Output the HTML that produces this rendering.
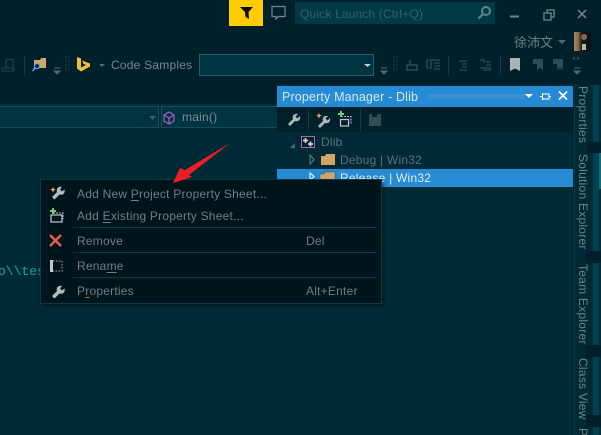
<!DOCTYPE html>
<html><head><meta charset="utf-8">
<style>
html,body{margin:0;padding:0;width:601px;height:435px;overflow:hidden;background:#00212b}
body{position:relative;font-family:"Liberation Sans","Noto Sans CJK TC",sans-serif;font-size:12px;color:#6c8186}
.a{position:absolute;white-space:nowrap}
.t{position:absolute;white-space:nowrap;line-height:16px;letter-spacing:.22px}
u{text-underline-offset:2px}
svg{position:absolute;overflow:visible}
.sep{position:absolute;left:73px;width:304px;height:1px;background:#0b3a47}
.v{position:absolute;left:573px;width:20px;writing-mode:vertical-rl;white-space:nowrap;font-size:12px;line-height:20px;color:#6c8186;letter-spacing:.25px}
</style></head><body>
<!-- editor -->
<div class="a" style="left:0;top:128px;width:277px;height:307px;background:#002b36"></div>
<div class="a" style="left:0;top:104px;width:277px;height:24px;background:#03303c"></div>
<div class="a" style="left:-2px;top:106px;width:159px;height:20px;background:#013440;border:1px solid #0f4f5c"></div>
<div class="a" style="left:161px;top:106px;width:116px;height:20px;background:#013440;border:1px solid #0f4f5c"></div>
<svg style="left:0;top:0" width="300" height="135"><path d="M149 116h7l-3.500 4z" fill="#3f5f66"/>
<path d="M169 112l5 3v6l-5 3-5-3v-6z M164 115l5 3 5-3 M169 118v6" fill="none" stroke="#a45fc0" stroke-width="1.200"/></svg>
<div class="t" style="left:182px;top:109px;color:#7b8f93">main()</div>
<div class="a" style="left:-2px;top:265px;width:42px;font:13px/14px 'Liberation Mono',monospace;color:#1fa398;letter-spacing:0;overflow:hidden">o\\test</div>

<!-- title bar -->
<div class="a" style="left:229px;top:0;width:34px;height:26px;background:#ffcc00"></div>
<svg style="left:0;top:0" width="300" height="30"><path d="M240 7h13l-4.500 5 .5 7-3.500-2-.5-5z" fill="#0a0a00"/>
<path d="M272 6.500h13v10h-6.500l-2.500 2.500v-2.500h-4z" fill="none" stroke="#6f8a8e" stroke-width="1.200"/></svg>
<div class="a" style="left:295px;top:2px;width:200px;height:22px;background:#013a46"></div>
<div class="t" style="left:300px;top:6px;color:#31626c;letter-spacing:.16px">Quick Launch (Ctrl+Q)</div>
<svg style="left:0;top:0" width="601" height="30"><circle cx="486" cy="11" r="4" fill="none" stroke="#5a858c" stroke-width="2"/><path d="M483 14l-4.500 4.500" stroke="#5a858c" stroke-width="2.200"/>
<path d="M510 16.500h9" stroke="#6f8a8e" stroke-width="2"/>
<path d="M544 13h7v7h-7z M547 13v-3h7v7h-3" fill="none" stroke="#6f8a8e" stroke-width="1.300"/>
<path d="M578 10l8 8M586 10l-8 8" stroke="#6f8a8e" stroke-width="1.500"/></svg>
<div class="a" style="left:514px;top:34px;font-size:13px;line-height:16px;color:#6c8186;font-family:'Noto Sans CJK TC',sans-serif">徐沛文</div>
<svg style="left:0;top:0" width="601" height="60"><path d="M558 40h8l-4 4z" fill="#4f6b70"/></svg>
<div class="a" style="left:574px;top:32px;width:17px;height:19px;background:linear-gradient(90deg,#a88a60 0,#8a6a48 25%,#141a1a 45%,#0b1010 100%)"></div>
<div class="a" style="left:581px;top:34px;width:6px;height:6px;background:#8a6658;border-radius:3px"></div>
<div class="a" style="left:582px;top:44px;width:4px;height:6px;background:#b8b8a8"></div>

<!-- toolbar -->
<svg style="left:0;top:0" width="601" height="85">
<path d="M6 59.500h7v11M6 59.500v8" fill="none" stroke="#20404a" stroke-width="1.200"/>
<path d="M2 68h12v3H2z" fill="none" stroke="#20404a"/>
<path d="M24.500 55v20" stroke="#0b3f4c"/>
<path d="M34 60h6l1-2h5v10H34z" fill="#d1a566"/>
<circle cx="37" cy="66" r="2.500" fill="#00212b" stroke="#5aa7e8" stroke-width="1.300"/>
<path d="M35 68l-2.500 3" stroke="#5aa7e8" stroke-width="1.500"/>
<path d="M54 68h6M54 71h6l-3 3z" stroke="#4f6b70" fill="#4f6b70"/>
<path d="M66 56v16M69 56v16" stroke="#1c4a55" stroke-dasharray="1 1"/>
<path d="M77 57l4 1.500v9l5-2.500-2.500-1-1.500-3.500 8 3v3l-9 5-4-3z" fill="#f2bd3a"/>
<path d="M99 64h6l-3 3z" fill="#4f6b70"/>
<path d="M381 68h6M381 71h6l-3 3z" stroke="#4f6b70" fill="#4f6b70"/>
<path d="M394 56v16M397 56v16" stroke="#1c4a55" stroke-dasharray="1 1"/>
<path d="M407 65h10v5h-10z M410 60v5" fill="none" stroke="#2e4c54" stroke-width="1.600"/>
<path d="M427 60h4v8h-4z M432 60h8M434 63h6M434 66h6M434 69h6" fill="none" stroke="#2e4c54" stroke-width="1.300"/>
<path d="M448.500 56v19" stroke="#0b3f4c"/>
<path d="M459 61h8M462 64h5M462 67h5M459 70h8" stroke="#2e4c54" stroke-width="1.300"/>
<path d="M480 60h4v3M486 62h5M486 65h5M480 68h11M483 70h8" fill="none" stroke="#2e4c54" stroke-width="1.300"/>
<path d="M500.500 56v19" stroke="#0b3f4c"/>
<path d="M510 58h10v13l-5-2.500-5 2.500z" fill="#a9b5b6"/>
<path d="M533 59h10v11l-3-2-3 2v-6h-4z" fill="#2e4c54"/><path d="M532 62l4-2v4z" fill="#2e4c54"/>
<path d="M553 59h10v11l-3-2-3 2v-6h-4z" fill="#2e4c54"/><path d="M556 60l4 2-4 2z" fill="#2e4c54"/>
<path d="M574 57v3M578 57v3" stroke="#4f6b70"/>
<path d="M574 68h6M574 71h6l-3 3z" stroke="#4f6b70" fill="#4f6b70"/>
</svg>
<div class="t" style="left:111px;top:57px;color:#6c8a90">Code Samples</div>
<div class="a" style="left:199px;top:54px;width:173px;height:20px;background:#013440;border:1px solid #1a6270"></div>
<svg style="left:0;top:0" width="400" height="80"><path d="M364 64h7l-3.500 3z" fill="#c8d2d2"/></svg>

<!-- property manager -->
<div class="a" style="left:277px;top:85px;width:296px;height:350px;background:#002b36"></div>
<div class="a" style="left:277px;top:86px;width:296px;height:21px;background:#268bd2"></div>
<div class="t" style="left:282px;top:89px;color:#d4e8f4;font-size:12.5px;letter-spacing:.15px">Property Manager - Dlib</div>
<div class="a" style="left:427px;top:94px;width:98px;height:5px;background:radial-gradient(#5fa9dd 40%,transparent 45%) 0 0/2px 2px"></div>
<svg style="left:0;top:0" width="601" height="135"><path d="M525 94h8l-4 4z" fill="#fff"/>
<path d="M540 96.500h2M542.500 93v7M542.500 94h6.500v5h-6.500M549 96.500h2" fill="none" stroke="#fff" stroke-width="1.100"/>
<path d="M559 91.500l8 8M567 91.500l-8 8" stroke="#fff" stroke-width="1.600"/></svg>
<div class="a" style="left:277px;top:107px;width:296px;height:25px;background:#00212b"></div>
<svg id="ic" style="left:0;top:0" width="601" height="135">
<path d="M288 124l5-5c-1-3 1-6 5-5l-2.500 2.500 2 2 2.500-2.500c1 4-2 6-5 5l-5 5z" fill="#aeb8b8"/>
<path d="M308.500 109v22" stroke="#0b3f4c"/>
<path d="M318 126l5-5c-1-3 1-6 5-5l-2.500 2.500 2 2 2.500-2.500c1 4-2 6-5 5l-5 5z" fill="#aeb8b8"/>
<path d="M319 113l1 2 2 .5-2 1-1 2-1-2-2-1 2-.5z" fill="#e8a15c"/>
<path d="M341 116.500h10v7" fill="none" stroke="#b8c2c2" stroke-dasharray="2 1"/>
<path d="M340.500 119.500h8v6.500h-8z" fill="none" stroke="#b8c2c2" stroke-width="1.300"/>
<path d="M338 114h6M341 111v6" stroke="#6fce6f" stroke-width="2"/>
<path d="M360.500 109v22" stroke="#0b3f4c"/>
<path d="M369 114h12v12h-12z" fill="#2e4c54"/><path d="M372 114h5v3h-5z" fill="#00212b"/>
</svg>
<div class="a" style="left:277px;top:169px;width:296px;height:18px;background:#268bd2"></div>
<svg style="left:0;top:0" width="601" height="190">
<path d="M290 148l5-5v5z" fill="#4f6b70"/>
<path d="M301.500 136.500h13v11h-13z" fill="#00212b" stroke="#b660b6"/>
<path d="M305.500 138v5M303 140.500h5M310.500 141.500v5M308 144h5" stroke="#d0d6d6" stroke-width="1.700"/>
<path d="M310 155l4 4.500-4 4.500z" fill="none" stroke="#6c8186"/>
<path d="M321 156h4l1-2h9v11h-14z" fill="#d1a566"/>
<path d="M310 173l4 3.500-4 3.500z" fill="none" stroke="#fff"/>
<path d="M320 174h4l1-2h10v11h-15z" fill="#d1a566" stroke="#1a5e8c" stroke-width=".5"/>
</svg>
<div class="t" style="left:321px;top:134px;color:#56707a">Dlib</div>
<div class="t" style="left:340px;top:152px;color:#56707a">Debug | Win32</div>
<div class="t" style="left:340px;top:170px;color:#e4f0f6">Release | Win32</div>

<!-- right rail -->
<div class="a" style="left:573px;top:85px;width:28px;height:350px;background:#002b36"></div>
<div class="a" style="left:574px;top:85px;width:1px;height:350px;background:#0b3a47"></div>
<div class="a" style="left:593px;top:85px;width:6px;height:350px;background:#004150"></div>
<div class="a" style="left:586px;top:142px;width:15px;height:11px;background:#00212b"></div>
<div class="a" style="left:586px;top:251px;width:15px;height:12px;background:#00212b"></div>
<div class="a" style="left:586px;top:345px;width:15px;height:12px;background:#00212b"></div>
<div class="a" style="left:586px;top:415px;width:15px;height:12px;background:#00212b"></div>
<div class="a" style="left:599px;top:153px;width:2px;height:36px;background:#0e6a7c"></div>
<div class="v" style="top:86px">Properties</div>
<div class="v" style="top:154px">Solution Explorer</div>
<div class="v" style="top:264px">Team Explorer</div>
<div class="v" style="top:358px">Class View</div>
<div class="v" style="top:428px">P</div>

<!-- context menu -->
<div class="a" style="left:40px;top:179px;width:340px;height:123px;background:#00151b;border:1px solid #0b3a47;box-shadow:2px 2px 3px rgba(0,0,0,.35)"></div>
<div class="sep" style="top:227px"></div>
<div class="sep" style="top:252px"></div>
<div class="sep" style="top:277px"></div>
<div class="t" style="left:77px;top:186px"><span>Add New <u>P</u>roject Property Sheet...</span></div>
<div class="t" style="left:77px;top:208px">Add <u>E</u>xisting Property Sheet...</div>
<div class="t" style="left:77px;top:233px">Remove</div>
<div class="t" style="left:77px;top:258px">Rena<u>m</u>e</div>
<div class="t" style="left:77px;top:283px">P<u>r</u>operties</div>
<div class="t" style="left:306px;top:233px">Del</div>
<div class="t" style="left:306px;top:283px">Alt+Enter</div>
<svg style="left:0;top:0" width="601" height="435">
<path d="M52 197l5-5c-1-3 1-6 5-5l-2 2.500 2 2 2.500-2c1 4-2 6-5 5l-5 5z" fill="#b4bcbc"/>
<path d="M53 187l1 2 2 .5-2 1-1 2-1-2-2-1 2-.5z" fill="#e8a15c"/>
<path d="M51 215h11v7H51z" fill="none" stroke="#b8c2c2" stroke-width="1.300"/>
<path d="M53 213h10v6" fill="none" stroke="#b8c2c2" stroke-dasharray="2 1"/>
<path d="M50 211h6M53 208v6" stroke="#6fce6f" stroke-width="2"/>
<path d="M50 235l11 11M61 235l-11 11" stroke="#e0604c" stroke-width="2.600"/>
<path d="M50 260h3v12h-3z" fill="#c0c8c8"/>
<path d="M53 261h9v10h-9" fill="none" stroke="#a8b2b2" stroke-dasharray="1.500 1.500"/>
<path d="M52 296l5-5c-1-3 1-6 5-5l-2 2.500 2 2 2.500-2c1 4-2 6-5 5l-5 5z" fill="#b4bcbc"/>
<path d="M230 143L185 170 180 168 173 183 192 177 189 175z" fill="#ee1c25"/>
</svg>
</body></html>
